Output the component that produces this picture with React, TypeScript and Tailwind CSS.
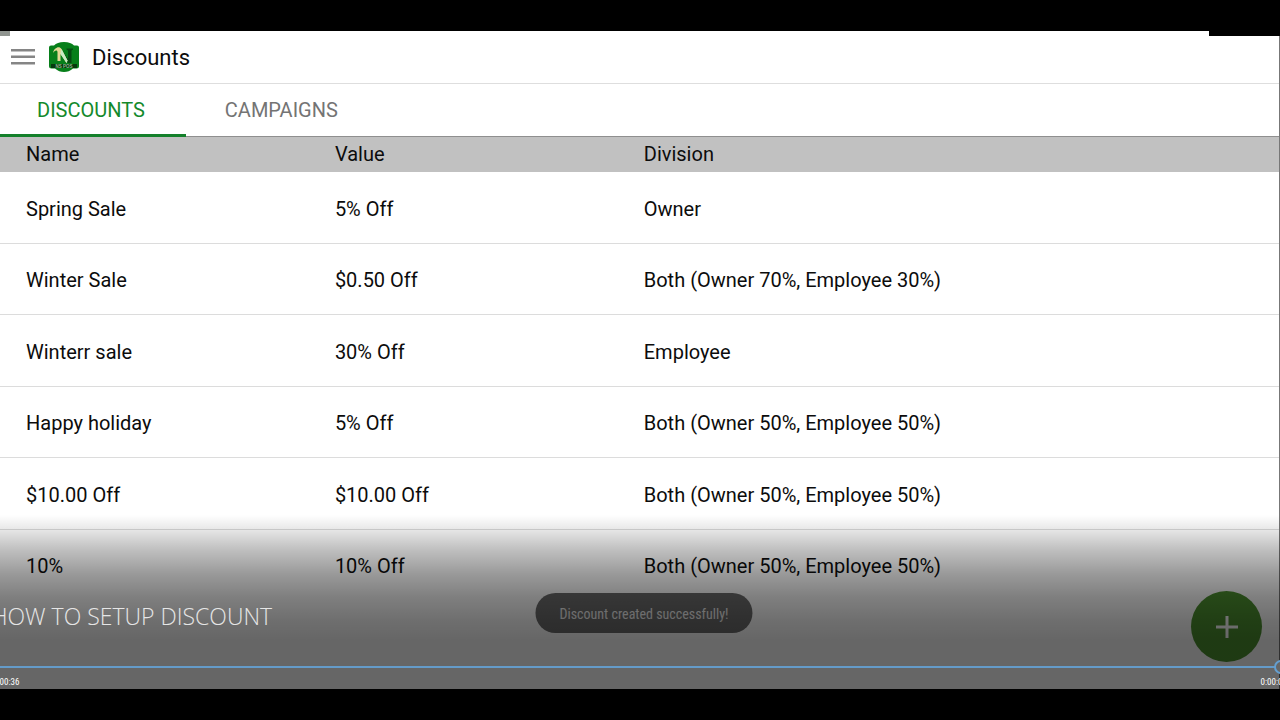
import { useState } from 'react';

type Discount = { name: string; value: string; division: string };

const discounts: Discount[] = [
  { name: 'Spring Sale', value: '5% Off', division: 'Owner' },
  { name: 'Winter Sale', value: '$0.50 Off', division: 'Both (Owner 70%, Employee 30%)' },
  { name: 'Winterr sale', value: '30% Off', division: 'Employee' },
  { name: 'Happy holiday', value: '5% Off', division: 'Both (Owner 50%, Employee 50%)' },
  { name: '$10.00 Off', value: '$10.00 Off', division: 'Both (Owner 50%, Employee 50%)' },
  { name: '10%', value: '10% Off', division: 'Both (Owner 50%, Employee 50%)' },
];

function Logo() {
  return (
    <svg viewBox="0 0 32 32" className="size-8" role="img" aria-label="NS POS">
      <path
        d="M1 6.500Q1 4.500 3 4.500H6Q9 1 16 1T26 4.500H29Q31 4.500 31 6.500V25Q31 27.500 28.500 27.500H25Q21 31 16 31T7 27.500H3.500Q1 27.500 1 25Z"
        fill="#077f1a"
      />
      <path d="M18.500 7.500H25V8.500L23.500 9.500V22H20L14 12V9.500L20 18V9.500L18.500 8.500Z" fill="#064a12" />
      <path d="M5 12C6 7 11 4.500 13.500 8L19.500 19.500L18.500 22L12.500 13V20H9.500V11C9 8.500 6.500 9.500 5 12Z" fill="#e4d795" />
      <path d="M13.500 8L19.500 19.500L18.500 22L12.500 13Z" fill="#c9edc5" />
      <path d="M3 23H29V27H3Z" fill="#053a0d" />
      <text x="16" y="26.600" textAnchor="middle" fontSize="4.500" fontWeight="700" fontFamily="Liberation Sans, sans-serif" fill="#8fb890">
        NS POS
      </text>
    </svg>
  );
}

function AppBar() {
  return (
    <header className="flex h-12 shrink-0 items-center border-b border-[#dedede] pb-[5px] pl-[11px]">
      <button type="button" aria-label="Open menu" className="text-[#858585]">
        <svg viewBox="0 0 24 18" className="h-[18px] w-6" fill="currentColor">
          <path d="M0 1h24v2.500H0zM0 7.500h24v2.500H0zM0 14h24v2.500H0z" />
        </svg>
      </button>
      <div className="ml-[13px]">
        <Logo />
      </div>
      <h1 className="ml-[12px] pt-0.5 text-[22px] leading-7">Discounts</h1>
    </header>
  );
}

function Tabs() {
  return (
    <nav className="flex h-[53px] shrink-0 border-b border-[#8f8f8f] text-[20px]">
      <a href="#discounts" aria-current="page" className="-mb-px flex items-center border-b-3 border-[#14802b] pt-0.5 pr-[41px] pl-[37px] text-[#148a2c]">
        DISCOUNTS
      </a>
      <a href="#campaigns" className="flex items-center px-[39px] text-[#747474]">
        CAMPAIGNS
      </a>
    </nav>
  );
}

function DiscountTable() {
  return (
    <table className="w-full table-fixed border-separate border-spacing-0 text-left text-[20px] leading-6">
      <thead className="bg-[#c1c1c1]">
        <tr className="h-[35px]">
          <th scope="col" className="w-[24.15%] pb-0.5 pl-[26px] font-normal">Name</th>
          <th scope="col" className="w-[24.15%] pb-0.5 pl-[26px] font-normal">Value</th>
          <th scope="col" className="pb-0.5 pl-[26px] font-normal">Division</th>
        </tr>
      </thead>
      <tbody className="[&>tr:last-child>td]:border-transparent">
        {discounts.map((d) => (
          <tr key={d.name} className="odd:h-[72px] even:h-[71px]">
            <td className="border-b border-[#dcdcdc] pt-0.5 pl-[26px]">{d.name}</td>
            <td className="border-b border-[#dcdcdc] pt-0.5 pl-[26px]">{d.value}</td>
            <td className="border-b border-[#dcdcdc] pt-0.5 pl-[26px]">{d.division}</td>
          </tr>
        ))}
      </tbody>
    </table>
  );
}

function PlayerControls() {
  const [position, setPosition] = useState(100);
  return (
    <div className="pointer-events-none absolute inset-x-0 bottom-0 flex h-[174px] flex-col justify-end overflow-hidden bg-[linear-gradient(to_bottom,rgba(0,0,0,0)_0%,rgba(0,0,0,0.08)_7%,rgba(0,0,0,0.25)_20%,rgba(0,0,0,0.4)_34%,rgba(0,0,0,0.5)_47%,rgba(0,0,0,0.57)_61%,rgba(0,0,0,0.6)_72%)]">
      <p className="-ml-[9px] font-['Open_Sans'] text-[23px] leading-8 font-light whitespace-nowrap text-[#e6e6e6]">HOW TO SETUP DISCOUNT</p>
      <input
        type="range"
        aria-label="Playback position"
        value={position}
        onChange={(e) => setPosition(Number(e.target.value))}
        className="pointer-events-auto mt-[27px] -mr-[8px] h-4 appearance-none bg-transparent [&::-webkit-slider-runnable-track]:h-[2px] [&::-webkit-slider-runnable-track]:bg-[#649bc9] [&::-webkit-slider-thumb]:-mt-[6px] [&::-webkit-slider-thumb]:size-[14px] [&::-webkit-slider-thumb]:appearance-none [&::-webkit-slider-thumb]:rounded-full [&::-webkit-slider-thumb]:border-2 [&::-webkit-slider-thumb]:border-[#649fd0] [&::-webkit-slider-thumb]:bg-[#666]"
      />
      <div className="-mr-[7px] -ml-[7px] flex h-[14px] justify-between font-['Roboto_Condensed',Roboto,sans-serif] text-[9px] leading-[14px] text-white">
        <time>0:00:36</time>
        <time>0:00:00</time>
      </div>
    </div>
  );
}

export default function App() {
  return (
    <div className="flex h-screen flex-col overflow-hidden bg-black py-[31px] font-[Roboto,sans-serif] text-[#0c0c0c]">
      <main className="relative flex min-h-0 flex-1 flex-col overflow-hidden bg-white">
        <div className="flex h-[5px] shrink-0 justify-between">
          <div className="w-[10px] bg-[#909590]" />
          <div className="w-[71px] bg-black" />
        </div>
        <div className="flex min-h-0 flex-1 flex-col overflow-hidden border-r border-[#777]">
          <AppBar />
          <Tabs />
          <DiscountTable />
        </div>
        <div role="status" className="absolute bottom-[56px] left-1/2 ml-1 flex h-10 -translate-x-1/2 items-center rounded-full bg-[#6c6c6c] px-6 pt-0.5 font-['Roboto_Condensed',Roboto,sans-serif] text-[14px] whitespace-nowrap text-[#f2f2f2]">
          Discount created successfully!
        </div>
        <button type="button" aria-label="Add discount" className="absolute right-[18px] bottom-[27px] flex size-[71px] items-center justify-center rounded-full bg-[#4c902f] text-white">
          <svg viewBox="0 0 24 24" className="size-6" fill="currentColor">
            <path d="M10.500 1h3v9.500H23v3h-9.500V23h-3v-9.500H1v-3h9.500z" />
          </svg>
        </button>
        <PlayerControls />
      </main>
    </div>
  );
}
